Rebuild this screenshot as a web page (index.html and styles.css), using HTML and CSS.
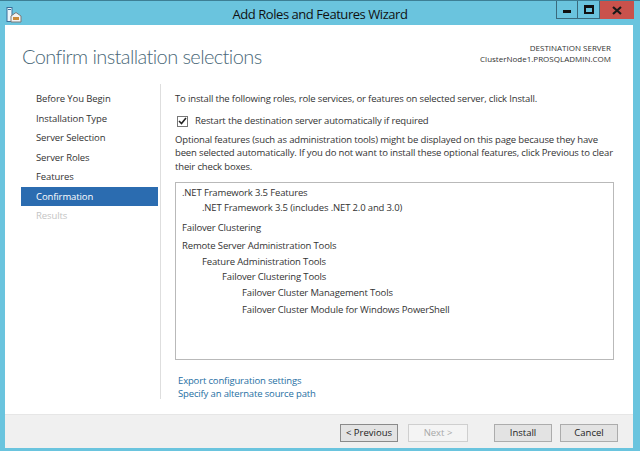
FILE: index.html
```html
<!DOCTYPE html>
<html lang="en">

<head>
    <meta charset="UTF-8">
    <meta name="viewport" content="width=device-width, initial-scale=1.0">
    <title>Add Roles and Features Wizard</title>
    <link rel="stylesheet" href="styles.css">
</head>

<body>
    <div class="window">
        <div class="titlebar">
            <div class="app-icon">
                <svg width="16" height="16" viewBox="0 0 16 16">
                    <rect x="1" y="0.5" width="5" height="14" fill="#eef6fa" stroke="#3a6f9a" stroke-width="1" />
                    <rect x="2" y="2" width="3" height="1" fill="#3a6f9a" />
                    <path d="M5 9 L10 5.5 L15 9 L15 15 L5 15 Z" fill="#f2f2f2" stroke="#7a7a7a" stroke-width="1" />
                    <rect x="7" y="10" width="6" height="3" fill="#c98a3a" />
                </svg>
            </div>
            <div class="title">Add Roles and Features Wizard</div>
            <div class="controls">
                <div class="ctl ctl-min"><span class="min-bar"></span></div>
                <div class="ctl ctl-max"><span class="max-box"></span></div>
                <div class="ctl ctl-close">
                    <svg width="10" height="9" viewBox="0 0 10 9">
                        <path d="M1 1 L9 8 M9 1 L1 8" stroke="#1a1a1a" stroke-width="2.2" />
                    </svg>
                </div>
            </div>
        </div>

        <div class="client">
            <div class="header">
                <h1 class="page-title">Confirm installation selections</h1>
                <div class="dest">
                    <div>DESTINATION SERVER</div>
                    <div>ClusterNode1.PROSQLADMIN.COM</div>
                </div>
            </div>

            <div class="content">
                <ul class="steps">
                    <li>Before You Begin</li>
                    <li>Installation Type</li>
                    <li>Server Selection</li>
                    <li>Server Roles</li>
                    <li>Features</li>
                    <li class="active">Confirmation</li>
                    <li class="disabled">Results</li>
                </ul>

                <div class="main">
                    <p class="intro">To install the following roles, role services, or features on selected server, click Install.</p>
                    <label class="restart">
                        <span class="checkbox">
                            <svg width="9" height="8" viewBox="0 0 9 8">
                                <path d="M1 4 L3.5 6.5 L8 1" fill="none" stroke="#222" stroke-width="1.6" />
                            </svg>
                        </span>
                        Restart the destination server automatically if required
                    </label>
                    <p class="note">Optional features (such as administration tools) might be displayed on this page because they have been selected automatically. If you do not want to install these optional features, click Previous to clear their check boxes.</p>

                    <div class="selections">
                        <div class="item">.NET Framework 3.5 Features</div>
                        <div class="item lvl1 gap-lg">.NET Framework 3.5 (includes .NET 2.0 and 3.0)</div>
                        <div class="item gap-md">Failover Clustering</div>
                        <div class="item">Remote Server Administration Tools</div>
                        <div class="item lvl1">Feature Administration Tools</div>
                        <div class="item lvl2">Failover Clustering Tools</div>
                        <div class="item lvl3 gap-sm">Failover Cluster Management Tools</div>
                        <div class="item lvl3">Failover Cluster Module for Windows PowerShell</div>
                    </div>

                    <div class="links">
                        <a href="#">Export configuration settings</a>
                        <a href="#">Specify an alternate source path</a>
                    </div>
                </div>
            </div>

            <div class="footer">
                <button class="btn">&lt; Previous</button>
                <button class="btn" disabled>Next &gt;</button>
                <button class="btn btn-install">Install</button>
                <button class="btn">Cancel</button>
            </div>
        </div>
    </div>
</body>

</html>
```

FILE: styles.css
```css
body {
    margin: 0;
    font-family: "Open Sans", "Noto Sans", sans-serif;
    background-color: #6ac4de;
}

.window {
    width: 640px;
    height: 451px;
    display: flex;
    flex-direction: column;
    background-color: #6ac4de;
    border-top: 1px solid #3d7f95;
    box-sizing: border-box;
    overflow: hidden;
}

/* title bar */
.titlebar {
    height: 24px;
    display: grid;
    grid-template-columns: 1fr auto 1fr;
    align-items: start;
}

.app-icon {
    padding: 5px 0 0 6px;
    height: 16px;
}

.title {
    font-size: 13px;
    color: #111;
    padding-top: 4px;
    letter-spacing: -0.45px;
}

.controls {
    display: flex;
    justify-content: flex-end;
    margin-right: 6px;
}

.ctl {
    height: 18px;
    display: flex;
    align-items: center;
    justify-content: center;
    box-sizing: border-box;
}

.ctl-min,
.ctl-max {
    width: 22px;
    border: 1px solid #3a6a7c;
    border-top: none;
}

.ctl-max {
    border-left: none;
}

.min-bar {
    display: block;
    width: 8px;
    height: 3px;
    margin-top: 4px;
    background-color: #111;
}

.max-box {
    display: block;
    width: 6px;
    height: 4px;
    border: 2px solid #111;
    border-top-width: 3px;
}

.ctl-close {
    width: 34px;
    background-color: #c9524c;
}

/* client area */
.client {
    flex: 1;
    margin: 0 7px 3px 5px;
    background-color: #fff;
    display: flex;
    flex-direction: column;
}

.header {
    height: 59px;
    display: flex;
    justify-content: space-between;
    align-items: flex-start;
}

.page-title {
    margin: 19px 0 0 17px;
    font-family: "Lato", "Open Sans", sans-serif;
    font-size: 20px;
    font-weight: 300;
    letter-spacing: -0.6px;
    color: #4a6878;
}

.dest {
    margin: 17px 22px 0 0;
    text-align: right;
    font-size: 8px;
    line-height: 11px;
    color: #333;
}

.content {
    flex: 1;
    display: flex;
}

.steps {
    list-style: none;
    margin: 0;
    padding: 5px 2px 0 16px;
    width: 137px;
    border-right: 1px solid #dedede;
    height: 310px;
}

.steps li {
    height: 19.5px;
    line-height: 19.5px;
    padding-left: 15px;
    font-size: 9.5px;
    letter-spacing: -0.1px;
    color: #333;
}

.steps li.active {
    background-color: #2b6cb0;
    color: #fff;
}

.steps li.disabled {
    color: #c4c4c4;
}

.main {
    flex: 1;
    padding: 8px 16px 0 14px;
    font-size: 9.5px;
    letter-spacing: -0.15px;
    color: #333;
}

.intro {
    margin: 0 0 8px 0;
    line-height: 14px;
}

.restart {
    display: flex;
    align-items: center;
    gap: 7px;
    line-height: 14px;
    margin-left: 2px;
}

.checkbox {
    width: 9px;
    height: 9px;
    border: 1px solid #777;
    display: flex;
    align-items: center;
    justify-content: center;
}

.note {
    margin: 5px 0 0 0;
    line-height: 13.3px;
}

.selections {
    margin-top: 9px;
    margin-right: 3px;
    height: 178px;
    border: 1px solid #b9b9b9;
    padding: 2px 6px;
    box-sizing: border-box;
}

.item {
    line-height: 15.5px;
}

.item.gap-lg {
    margin-bottom: 4.5px;
}

.item.gap-md {
    margin-bottom: 2.5px;
}

.item.gap-sm {
    margin-bottom: 1.5px;
}

.lvl1 {
    padding-left: 20px;
}

.lvl2 {
    padding-left: 40px;
}

.lvl3 {
    padding-left: 60px;
}

.links {
    margin-top: 14px;
    display: flex;
    flex-direction: column;
    padding-left: 3px;
}

.links a {
    color: #1f6fa3;
    text-decoration: none;
    line-height: 13px;
}

/* footer */
.footer {
    height: 34px;
    background-color: #f0f0f0;
    border-top: 1px solid #e6e6e6;
    display: flex;
    align-items: center;
    justify-content: flex-end;
    padding-right: 15px;
    padding-top: 2px;
    box-sizing: border-box;
}

.btn {
    width: 58px;
    height: 18px;
    font-family: inherit;
    font-size: 9.5px;
    color: #222;
    background-color: #e3e3e3;
    border: 1px solid #acacac;
    padding: 0;
    margin-left: 8px;
}

.btn:first-child {
    border-color: #8a8a8a;
}

.btn:disabled {
    color: #a8a8a8;
    background-color: #f4f4f4;
    border-color: #cfcfcf;
    width: 60px;
    margin-left: 10px;
}

.btn-install {
    margin-left: 26px;
}
```
